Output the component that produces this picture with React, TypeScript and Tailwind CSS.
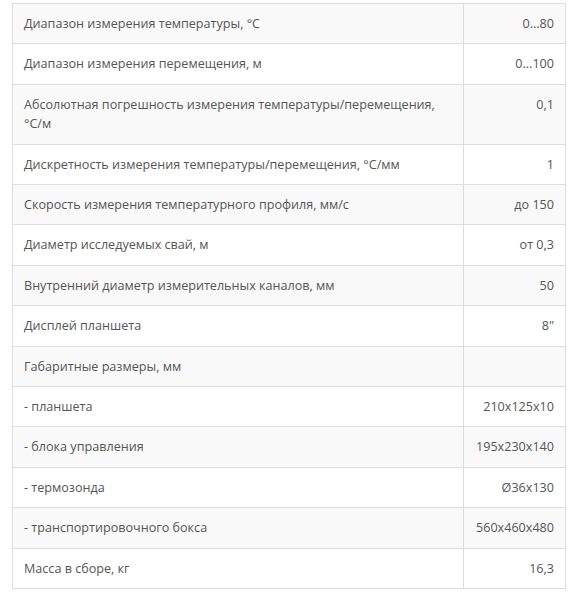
import React from "react";

const rows: [string, string][] = [
    ["Диапазон измерения температуры, °С", "0...80"],
    ["Диапазон измерения перемещения, м", "0...100"],
    ["Абсолютная погрешность измерения температуры/перемещения, °С/м", "0,1"],
    ["Дискретность измерения температуры/перемещения, °С/мм", "1"],
    ["Скорость измерения температурного профиля, мм/с", "до 150"],
    ["Диаметр исследуемых свай, м", "от 0,3"],
    ["Внутренний диаметр измерительных каналов, мм", "50"],
    ["Дисплей планшета", "8\""],
    ["Габаритные размеры, мм", ""],
    ["- планшета", "210x125x10"],
    ["- блока управления", "195x230x140"],
    ["- термозонда", "Ø36x130"],
    ["- транспортировочного бокса", "560x460x480"],
    ["Масса в сборе, кг", "16,3"],
];

export default function App() {
    return (
        <div className="w-[574px] h-[594px] bg-white pl-[12px] pt-[3px]" style={{ fontFamily: '"Open Sans", "Liberation Sans", sans-serif' }}>
            <table className="w-[553px] table-fixed border-collapse border border-[#dddddd] text-[12.6px] leading-[19.4px] text-[#555555]">
                <colgroup>
                    <col className="w-[451px]" />
                    <col className="w-[102px]" />
                </colgroup>
                <tbody>
                    {rows.map(([name, value], i) => (
                        <tr key={i} className={i % 2 === 0 ? "bg-[#f9f9f9]" : "bg-white"}>
                            <td className="border border-[#dddddd] px-[11px] py-[10px] align-top text-left">
                                {name}
                            </td>
                            <td className="border border-[#dddddd] px-[11px] py-[10px] align-top text-right">
                                {value}
                            </td>
                        </tr>
                    ))}
                </tbody>
            </table>
        </div>
    );
}
